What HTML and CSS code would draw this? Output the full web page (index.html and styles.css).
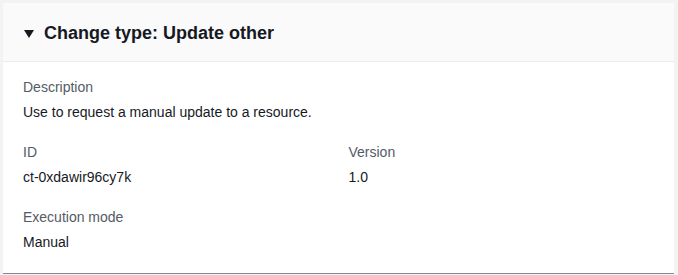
FILE: index.html
```html
<!DOCTYPE html>
<html lang="en">
<head>
    <meta charset="UTF-8">
    <meta name="viewport" content="width=device-width, initial-scale=1.0">
    <title>Change type</title>
    <link rel="stylesheet" href="styles.css">
</head>
<body>
    <div class="panel">
        <div class="panel-header">
            <span class="caret"></span>
            <h2>Change type: Update other</h2>
        </div>
        <div class="panel-body">
            <div class="field">
                <div class="label">Description</div>
                <div class="value">Use to request a manual update to a resource.</div>
            </div>
            <div class="columns">
                <div class="field">
                    <div class="label">ID</div>
                    <div class="value">ct-0xdawir96cy7k</div>
                </div>
                <div class="field">
                    <div class="label">Version</div>
                    <div class="value">1.0</div>
                </div>
            </div>
            <div class="field">
                <div class="label">Execution mode</div>
                <div class="value">Manual</div>
            </div>
        </div>
    </div>
</body>
</html>
```

FILE: styles.css
```css
body {
    font-family: "Liberation Sans", Arial, sans-serif;
    font-size: 14px;
    line-height: 22px;
    color: #16191f;
    background-color: #f2f3f3;
    margin: 3px 4px 0 3px;
}
.panel {
    background: #fff;
    border-bottom: 1px solid #7d8998;
    box-shadow: 0 1px 1px 0 rgba(0, 28, 36, 0.3);
}
.panel-header {
    display: flex;
    align-items: center;
    gap: 10px;
    background-color: #fafafa;
    border-bottom: 1px solid #eaeded;
    padding: 19px 20px 17px 21px;
}
.caret {
    width: 0;
    height: 0;
    border-left: 5px solid transparent;
    border-right: 5px solid transparent;
    border-top: 8px solid #16191f;
    margin-top: 1px;
}
h2 {
    margin: 0;
    font-size: 18px;
    line-height: 22px;
    font-weight: bold;
}
.panel-body {
    padding: 14px 20px 20px 20px;
    display: flex;
    flex-direction: column;
    gap: 18px;
}
.columns {
    display: grid;
    grid-template-columns: 1fr 1fr;
    gap: 20px;
}
.label {
    color: #545b64;
    margin-bottom: 3px;
}
```
